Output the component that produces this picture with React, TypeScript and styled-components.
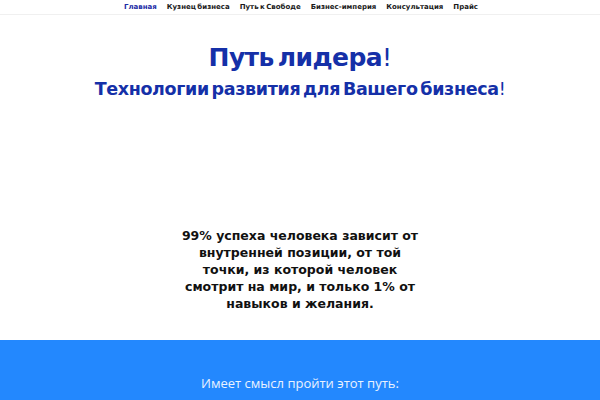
import styled, { createGlobalStyle } from 'styled-components';

const GlobalStyle = createGlobalStyle`
  html, body {
    margin: 0;
    padding: 0;
    background: #ffffff;
  }
  body {
    font-family: 'DejaVu Sans', sans-serif;
  }
`;

const Page = styled.div`
  width: 600px;
  height: 400px;
  overflow: hidden;
  display: flex;
  flex-direction: column;
`;

const Nav = styled.nav`
  height: 14px;
  display: flex;
  justify-content: center;
  align-items: center;
  gap: 10px;
  border-bottom: 1px solid #f0f0f0;
  padding-left: 2px;
`;

const NavItem = styled.a<{ $active?: boolean }>`
  font-family: 'DejaVu Sans', sans-serif;
  font-weight: bold;
  font-size: 7px;
  word-spacing: -1px;
  color: ${(p) => (p.$active ? '#1c2ba6' : '#1a1a1a')};
  text-decoration: none;
`;

const Hero = styled.section`
  flex: 1;
  display: flex;
  flex-direction: column;
  align-items: center;
  padding-top: 26px;
`;

const Title = styled.h1`
  margin: 0;
  font-family: 'DejaVu Sans', sans-serif;
  font-weight: bold;
  font-size: 25px;
  line-height: 34px;
  letter-spacing: -0.6px;
  word-spacing: -4px;
  color: #1530a8;
`;

const Subtitle = styled.h2`
  margin: 2px 0 0;
  font-family: 'DejaVu Sans', sans-serif;
  font-weight: bold;
  font-size: 17.5px;
  line-height: 24px;
  letter-spacing: -0.35px;
  word-spacing: -3px;
  color: #1530a8;
`;

const Bang = styled.span`
  font-weight: normal;
`;

const Quote = styled.p`
  margin: 126px 0 0;
  width: 250px;
  text-align: center;
  font-family: 'DejaVu Sans', sans-serif;
  font-weight: bold;
  font-size: 12.5px;
  line-height: 17px;
  color: #111111;
`;

const Band = styled.section`
  height: 60px;
  background: #2388fe;
  display: flex;
  justify-content: center;
  padding-top: 33px;
  box-sizing: border-box;
`;

const BandText = styled.p`
  margin: 0;
  font-family: 'Open Sans', 'DejaVu Sans', sans-serif;
  font-size: 13px;
  line-height: 20px;
  color: #eaf2ff;
`;

const links = ['Главная', 'Кузнец бизнеса', 'Путь к Свободе', 'Бизнес-империя', 'Консультация', 'Прайс'];

export default function App() {
  return (
    <Page>
      <GlobalStyle />
      <Nav>
        {links.map((l, i) => (
          <NavItem key={l} href="#" $active={i === 0}>
            {l}
          </NavItem>
        ))}
      </Nav>
      <Hero>
        <Title>
          Путь лидера<Bang>!</Bang>
        </Title>
        <Subtitle>
          Технологии развития для Вашего бизнеса<Bang>!</Bang>
        </Subtitle>
        <Quote>
          99% успеха человека зависит от внутренней позиции, от той точки, из которой человек смотрит на мир, и только 1% от навыков и желания.
        </Quote>
      </Hero>
      <Band>
        <BandText>Имеет смысл пройти этот путь:</BandText>
      </Band>
    </Page>
  );
}
